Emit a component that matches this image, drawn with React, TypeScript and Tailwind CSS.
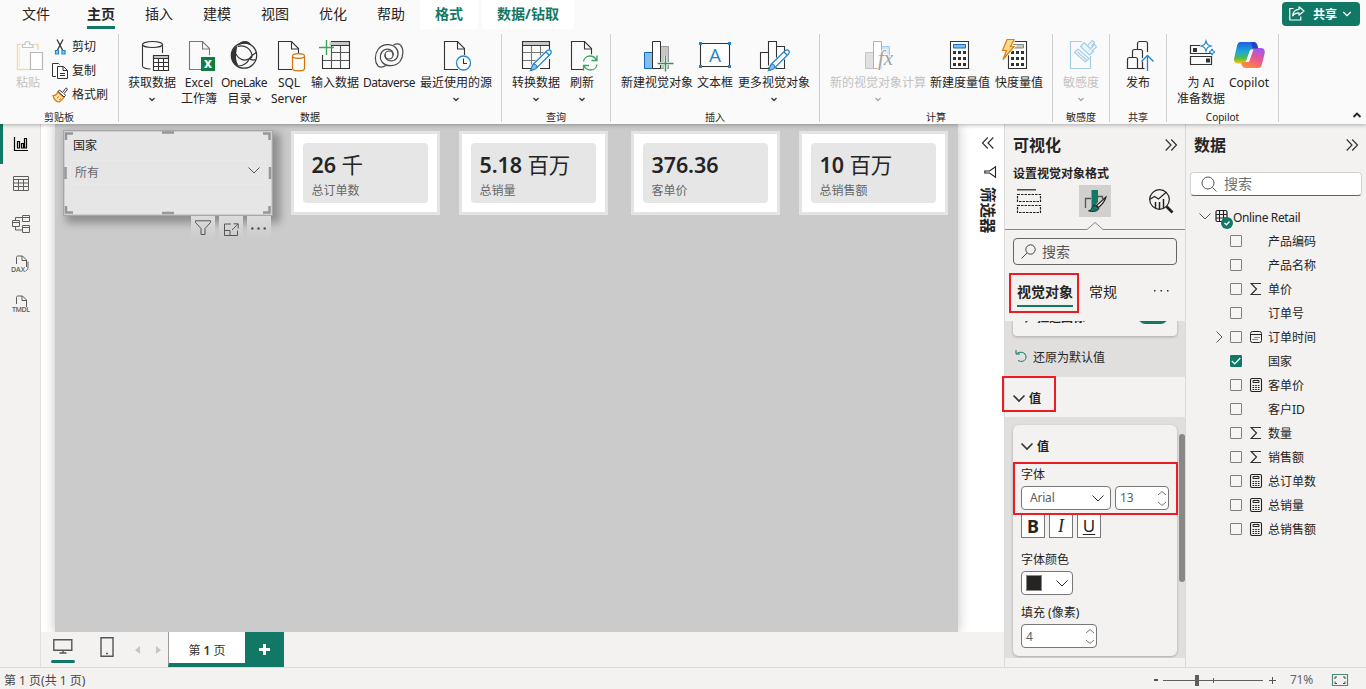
import React from "react";
import { ChevronDown } from "lucide-react";

const INK = "#333333";

const Svg: React.FC<{ w?: number; h?: number; className?: string; children: React.ReactNode }> = ({
  w = 32,
  h = 32,
  className = "",
  children,
}) => (
  <svg width={w} height={h} viewBox={`0 0 ${w} ${h}`} fill="none" className={`shrink-0 overflow-visible ${className}`}>
    {children}
  </svg>
);

/* ---------- ribbon icons ---------- */

const Doc = ({ x, stroke = INK }: { x: number; stroke?: string }) => (
  <g transform={`translate(${x} 0)`} stroke={stroke} strokeWidth="1.1">
    <path d="M14 29.500H.5v-28h13l7 7V15" fill="#fafafa" />
    <path d="M13.500 1.500v7.500h7" />
  </g>
);

const Pencil = () => (
  <g>
    <path d="M12 29L28 13" stroke="#fafafa" strokeWidth="7" />
    <g stroke="#1f83c9" strokeWidth="1.200">
      <path d="M13.500 24L27 10.700c3-2 5.500.5 3.500 3.300L17 27.500z" fill="#fafafa" />
      <path d="M26 12l3 3" />
      <path d="M13.500 24c1.800 0 3.500 1.700 3.500 3.500-1.500 2.500-4 2.300-6.500 3 1.300-2 .8-4.500 3-6.500z" fill="#83beec" />
    </g>
  </g>
);

const GetData = () => (
  <Svg>
    <g stroke={INK} strokeWidth="1.1">
      <ellipse cx="16.500" cy="4.500" rx="10" ry="3" />
      <path d="M6.500 4.500v21.500c0 1.500 3 2.700 8 3M26.500 4.500V13" />
      <path d="M17.500 15.500h15v15h-15z" fill="#fff" />
      <path d="M17.500 15.500h15v3h-15z" fill="#c8c6c4" />
      <path d="M17.500 22.500h15M17.500 26.500h15M22.500 18.500v12M27.500 18.500v12" />
    </g>
  </Svg>
);

const Excel = () => (
  <Svg>
    <Doc x={6} stroke="#777" />
    <path d="M18 17h14v14H18z" fill="#107c41" />
    <text x="25" y="28" textAnchor="middle" fontSize="11" fontWeight="800" fill="#fff" fontFamily="Open Sans, sans-serif">
      X
    </text>
  </Svg>
);

const OneLake = () => (
  <Svg>
    <circle cx="16" cy="15.500" r="12.700" stroke={INK} strokeWidth="1.200" />
    <path d="M9.500 5.500C5.500 8 3.300 11 3.300 15.500c0 5 3.200 9 8.200 11.500-2.500-3.500-3.700-7-3.500-11 .2-4 .8-7 1.500-10.500z" fill={INK} />
    <path d="M9.500 6c1.500-3.500 4-5 7.500-5 3 0 5.500 2 6.500 4.500-4.500-2.500-9.500-2.500-14 .5z" fill={INK} />
    <path
      d="M8 14c3 6 9 7.500 13.500 4.500M10 6.500c6.500-2 12.500 2 14 8.500.3 2-.5 3-2.500 3.500M11 26c5-.5 8.500-3 10.500-7.500 1-2 3-3.500 6.500-6M21.500 18.500c1.500 1.500 3.500 2 6 1"
      stroke={INK}
      strokeWidth="1.200"
    />
  </Svg>
);

const Sql = () => (
  <Svg>
    <Doc x={5} />
    <g stroke="#d9700b" strokeWidth="1.200" fill="#fff">
      <path d="M19.500 16v12.500c0 1.300 2.500 2.300 6 2.300s6-1 6-2.300V16" />
      <ellipse cx="25.500" cy="16" rx="6" ry="2.300" />
    </g>
  </Svg>
);

const EnterData = () => (
  <Svg>
    <path d="M10.500 1.500h20v4h-20z" fill="#c8c6c4" />
    <g stroke="#555" strokeWidth="1.100">
      <path d="M3 20.500h27M13 12.500h17M12.500 6v22M21.500 6v22" />
      <path d="M3.500 15v13.500h27v-27H12M12 5.500h18.500" stroke={INK} />
    </g>
    <path d="M7.500 0v15M0 7.500h15" stroke="#3da35d" strokeWidth="1.400" />
  </Svg>
);

const Dataverse = () => (
  <Svg>
    <g stroke="#4a4a4a" strokeWidth="1.200">
      <path d="M5 26C1.500 22 1.500 14.500 5 9.500 9 4 18 2.500 23 8c3.500 4 2.500 10-2 12.300-4.500 2-9.500-1-9-5.800" />
      <path d="M27.500 5c3.500 4 3 11.500-.5 16.500-4 5-13.500 6-18 .5-3-4-2-10 2.500-12.300 4.500-2 9 1 8.800 5.500" />
      <path d="M5 26c2 1.500 5 1.300 8-.5M27.500 5c-2-1.500-4.500-1.300-7 0" />
      <circle cx="16" cy="15" r="4" />
    </g>
  </Svg>
);

const Recent = () => (
  <Svg>
    <Doc x={4} />
    <circle cx="23.500" cy="23" r="7" fill="#fff" stroke="#2b88c8" strokeWidth="1.300" />
    <path d="M23.500 18.500V23.500H27" stroke={INK} strokeWidth="1.100" />
  </Svg>
);

const Transform = () => (
  <Svg>
    <path d="M2.500 1.500h27v4h-27z" fill="#c8c6c4" />
    <g strokeWidth="1.100">
      <path d="M3 12.500h26M3 20.500h18M11.500 6v22M20.500 6v15" stroke="#777" />
      <path d="M11 28.500H2.500v-27h27v8M2.500 5.500h27M29.500 19v9.500H20" stroke={INK} />
    </g>
    <Pencil />
  </Svg>
);

const Refresh = () => (
  <Svg>
    <Doc x={5} />
    <circle cx="24" cy="23" r="9" fill="#fafafa" />
    <path
      d="M17.500 21.500c.5-3.500 3.500-5.500 6.500-5.500 2.500 0 5 1.300 6.300 4M31 15.500V20.500h-5.500M31 24.500c-.5 3.500-3.500 5.500-6.500 5.500-2.500 0-5-1.300-6.500-4M17.500 30.500V25.500H23"
      stroke="#3da35d"
      strokeWidth="1.300"
    />
  </Svg>
);

const NewVisual = () => (
  <Svg>
    <path d="M19.500 6.500h8v22h-8z" fill="#c8c6c4" stroke="#999" />
    <path d="M3.500 12.500h8v16h-8z" fill="#83beec" stroke="#0f6cbd" />
    <path d="M11.500 1.500h8v27h-8z" fill="#fff" stroke={INK} />
    <path d="M24.500 15.500v16M16.500 23.500h16" stroke="#fafafa" strokeWidth="3" />
    <path d="M24.500 15.500v16M16.500 23.500h16" stroke="#2f9a4a" strokeWidth="1.400" />
  </Svg>
);

const TextBox = () => (
  <Svg>
    <path d="M1.500 3.500h29v23h-29z" fill="#fff" stroke={INK} strokeWidth="1.100" />
    <path d="M0 2h3v3H0zM29 2h3v3h-3zM0 25h3v3H0zM29 25h3v3h-3z" fill="#1f83c9" />
    <text x="16" y="22" textAnchor="middle" fontSize="19" fill="#1f83c9" fontFamily="Open Sans, sans-serif">
      A
    </text>
  </Svg>
);

const MoreVisuals = () => (
  <Svg>
    <path d="M2.500 12.500h8v16h-8zM10.500 1.500h8v27h-8zM18.500 6.500h8v22h-8z" fill="#fff" stroke={INK} strokeWidth="1.100" />
    <Pencil />
  </Svg>
);

const NewCalc = () => (
  <Svg>
    <path d="M3.500 12.500h8v16h-8z" fill="#e3e1df" stroke="#c4c4c4" />
    <path d="M19.500 6.500h8v10h-8z" fill="#cfe6f7" stroke="#a3cdea" />
    <path d="M11.500 1.500h8v27h-8z" fill="#fff" stroke="#b0b0b0" />
    <text
      x="16"
      y="25"
      fontSize="21"
      fontStyle="italic"
      fill="#a3a3a3"
      stroke="#fafafa"
      strokeWidth="2"
      paintOrder="stroke"
      fontFamily="Liberation Serif, serif"
    >
      fx
    </text>
  </Svg>
);

const CalcBody = ({ x, fill }: { x: number; fill: string }) => (
  <g transform={`translate(${x} 0)`}>
    <path d="M.5 1.500h18v27H.5z" fill="#fff" stroke={INK} strokeWidth="1.100" />
    <path d="M3.500 4.500h12v3.500h-12z" fill={fill} stroke={fill === "#83beec" ? "#0f6cbd" : "#888"} />
    <path
      d="M3 11h3v3H3zM8 11h3v3H8zM13 11h3v3h-3zM3 17h3v3H3zM8 17h3v3H8zM13 17h3v3h-3zM3 23h3v3H3zM8 23h3v3H8zM13 23h3v3h-3z"
      fill={INK}
    />
  </g>
);

const NewMeasure = () => (
  <Svg>
    <CalcBody x={6} fill="#83beec" />
  </Svg>
);

const QuickMeasure = () => (
  <Svg>
    <CalcBody x={5} fill="#c8c6c4" />
    <path d="M4 -.5h7L7.500 6.500H11L0 19.500l3.500-9H-.5z" fill="#ffd98a" stroke="#fafafa" strokeWidth="3" />
    <path d="M4 -.5h7L7.500 6.500H11L0 19.500l3.500-9H-.5z" fill="#ffd98a" stroke="#e07a10" strokeWidth="1.200" />
  </Svg>
);

const Sensitivity = () => (
  <Svg>
    <g stroke="#a3cfe8" strokeWidth="1.200">
      <path d="M17 1.500H5.500v27h20V16" />
      <path d="M9.500 12.500l3.500-3.500 11 9.500-3.500 3.500zM12.500 12l9 8" fill="#fafafa" />
      <path d="M19 2.500l9.500 9-4 3.500-9-8.500z" fill="#eaf5fb" />
      <path d="M22.500 5.500L27.500.500l2 2-3 3.500M25.500 9l2.500-3 1.500-1.500 2 2.500-4.500 4" fill="#fafafa" />
    </g>
  </Svg>
);

const Publish = () => (
  <Svg>
    <g stroke={INK} strokeWidth="1.200" fill="#fafafa">
      <path d="M15.500 28.500v-25c0-1 1-2 2-2h6c1 0 2 1 2 2V12" />
      <path d="M10.500 17v-5.500c0-1 1-2 2-2h6c1 0 2 1 2 2v17h-5" />
      <path d="M5.500 28.500v-9c0-1 1-2 2-2h6c1 0 2 1 2 2v9z" />
      <path d="M15.500 28.500h7" />
    </g>
    <path d="M25.500 31V15.500M20 21l5.500-5.500L31 21" stroke="#fafafa" strokeWidth="3.500" />
    <path d="M25.500 31V15.500M19.500 21.500l6-6 6 6" stroke="#1f83c9" strokeWidth="1.300" />
  </Svg>
);

const PrepAi = () => (
  <Svg>
    <g stroke={INK} strokeWidth="1.200">
      <path d="M15 5.500H5.500v8h21" />
      <path d="M5.500 16.500h21v8h-21z" />
    </g>
    <path d="M8 8h4v4H8zM21 18.500h4v4h-4z" fill={INK} />
    <g stroke="#2b88c8" strokeWidth="1.200">
      <path d="M21 1c1 3.500 1.500 4 5 5-3.500 1-4 1.500-5 5-1-3.500-1.500-4-5-5 3.500-1 4-1.500 5-5z" fill="#fafafa" />
      <path d="M27 9c.5 2 1 2.500 3 3-2 .5-2.500 1-3 3-.5-2-1-2.500-3-3 2-.5 2.500-1 3-3z" fill="#fafafa" />
    </g>
  </Svg>
);

const Copilot = () => (
  <Svg>
    <defs>
      <linearGradient id="cpA" x1="0" y1="0" x2="0" y2="1">
        <stop offset="0" stopColor="#1c5fe0" />
        <stop offset=".45" stopColor="#1ba7d8" />
        <stop offset=".75" stopColor="#58b84a" />
        <stop offset="1" stopColor="#ffc800" />
      </linearGradient>
      <linearGradient id="cpB" x1=".7" y1="0" x2=".3" y2="1">
        <stop offset="0" stopColor="#a057f0" />
        <stop offset=".5" stopColor="#e9588f" />
        <stop offset="1" stopColor="#ff8a3c" />
      </linearGradient>
    </defs>
    <path d="M7.500 2H20c3 0 4 2 4.500 4l1 3H20c-2 0-3 1-3.500 2.500L13 21.500C12 23 11 23.500 9 23.500H5c-3.500 0-4.500-3-3.700-6L4 6c.6-2.500 1.500-4 3.500-4z" fill="url(#cpA)" />
    <path d="M25.500 28H13c-3 0-4-2-4.500-4L8 22.500h3c2.500 0 3.500-1 4-2.500l3.500-10c.5-1.500 1.500-2 3-2h6.500c3.500 0 4.300 3 3.500 6L29 24c-.6 2.500-1.500 4-3.500 4z" fill="url(#cpB)" />
    <path d="M18 2h2.500c2.500 0 3.500 2 4 4l.7 2.500h-5.500z" fill="#2a3fc0" />
    <path d="M19 9.500h1.500l-4.500 12.500h-3l4-11z" fill="#fafafa" />
  </Svg>
);

const Caret = ({ muted = false }: { muted?: boolean }) => (
  <svg width="6" height="5" viewBox="0 0 6 5" fill="none" className="inline-block">
    <path d="M.5 1L3 3.500 5.500 1" stroke={muted ? "#a8a8a8" : "#333"} strokeWidth="1.300" />
  </svg>
);

/* ---------- ribbon ---------- */

type BtnProps = {
  w: string;
  icon: React.ReactNode;
  label: string;
  line2?: string;
  caret?: boolean;
  muted?: boolean;
  tight?: boolean;
};

const RibbonBtn: React.FC<BtnProps> = ({ w, icon, label, line2, caret, muted, tight }) => (
  <button className={`${w} flex shrink-0 flex-col items-center pt-2 whitespace-nowrap ${muted ? "text-[#c2c2c2]" : ""}`}>
    {icon}
    <span className={`mt-[3px] h-4 leading-4 ${tight ? "tracking-[-0.55px]" : ""}`}>{label}</span>
    <span className="flex h-4 items-center gap-[3px] leading-4">
      {line2}
      {caret && <Caret muted={muted} />}
    </span>
  </button>
);

const Group: React.FC<{ w: string; label: string; children: React.ReactNode }> = ({ w, label, children }) => (
  <div className={`${w} flex h-[88px] shrink-0 flex-col border-r border-[#d0d0d0]`}>
    <div className="-mt-0.5 flex h-[79px] shrink-0">{children}</div>
    <div className="text-center text-[10px] leading-[13px]">{label}</div>
  </div>
);

const tabs = ["插入", "建模", "视图", "优化", "帮助"];

const Ribbon = () => (
  <header className="relative z-20 h-[124px] shrink-0 bg-[#fafafa] shadow-[0_1px_4px_rgba(0,0,0,0.3)]">
    <div className="flex h-[34px] items-start text-sm leading-[27px]">
      <span className="w-[72px] text-center">文件</span>
      <span className="flex w-[58px] flex-col items-center font-bold">
        <span className="h-[26px]">主页</span>
        <span className="h-[3px] w-7 bg-[#117865]" />
      </span>
      {tabs.map((t) => (
        <span key={t} className="w-[58px] text-center">
          {t}
        </span>
      ))}
      <span className="h-[29px] w-[58px] bg-white text-center font-bold text-[#117865]">格式</span>
      <span className="ml-1 h-[29px] w-[92px] bg-white text-center font-bold text-[#117865]">数据/钻取</span>
      <button className="mt-0.5 mr-1.5 ml-auto flex h-6 w-[78px] items-center rounded bg-[#117865] pl-[7px] text-xs font-bold text-white">
        <Svg w={16} h={16}>
          <path
            d="M4.500 2.500H.8v11.500h11V10.500M10 .8l5 4.200-5 4.200V6.800c-3 0-5 1-6.300 3C4 6 6 3.500 10 3.300z"
            stroke="#fff"
            strokeWidth="1.200"
            strokeLinejoin="round"
          />
        </Svg>
        <span className="mt-0.5 ml-2">共享</span>
        <ChevronDown size={14} strokeWidth={2} className="ml-[3px]" />
      </button>
    </div>
    <div className="flex text-xs">
      <Group w="w-[119px]" label="剪贴板">
        <button className="flex w-14 flex-col items-center pt-2 text-[#c2c2c2]">
          <Svg>
            <path d="M9 4.500H5.500v25H18M26 10V4.500h-3.500" stroke="#f5d9ae" strokeWidth="1.500" />
            <path d="M7.500 27V7" stroke="#f9e6c8" />
            <path d="M10.500 7.500v-3H13c0-2 1-3 2.500-3s2.500 1 2.500 3h3v3z" stroke="#c4c4c4" strokeWidth="1.200" fill="#fafafa" />
            <path d="M18.500 12.500h12v17h-12z" stroke="#b8b8b8" strokeWidth="1.200" fill="#fff" />
          </Svg>
          <span className="mt-[3px] leading-4">粘贴</span>
        </button>
        <div className="-ml-1 flex flex-col pt-[3px] text-xs leading-6">
          <div className="flex h-6 items-center gap-1">
            <Svg w={16} h={16}>
              <path d="M5 .5l5.500 10.500M11 .5L5.500 11" stroke={INK} strokeWidth="1.300" />
              <path d="M3.500 11.500h3v3.500h-3zM10 11.500h3v3.500h-3z" fill="#9bd0f5" stroke="#1f83c9" strokeWidth="1.200" />
            </Svg>
            剪切
          </div>
          <div className="flex h-6 items-center gap-1">
            <Svg w={16} h={16}>
              <path d="M4 13.500H.5V.5h6l1 1" stroke={INK} />
              <path d="M5.500 3.500h6l4 4v8h-10zM11 3.500v4h4.500M8 10.500h5M8 12.500h5" stroke={INK} />
            </Svg>
            复制
          </div>
          <div className="flex h-6 items-center gap-1">
            <Svg w={16} h={16}>
              <path d="M6 5l6 5.500-4.500 4.500c-3 0-5.500-2.500-6.500-6.500C3 9 5 7 6 5z" fill="#ffe3ad" stroke="#e07a10" strokeWidth="1.200" />
              <path d="M5 11l2-1.500M7 13l2-1.500" stroke="#e07a10" />
              <path d="M6 4.500l1.500-1.500L10.500 5.500l3-4c1-1 2.500.3 1.500 1.500L12 6.500l1.500 2-1.500 1.500z" fill="#fff" stroke={INK} />
            </Svg>
            格式刷
          </div>
        </div>
      </Group>
      <Group w="w-[383px]" label="数据">
        <div className="w-[7px] shrink-0" />
        <RibbonBtn w="w-[52px]" icon={<GetData />} label="获取数据" caret />
        <RibbonBtn w="w-[42px]" icon={<Excel />} label="Excel" line2="工作簿" />
        <RibbonBtn w="w-[48px]" icon={<OneLake />} label="OneLake" line2="目录" caret tight />
        <RibbonBtn w="w-[42px]" icon={<Sql />} label="SQL" line2="Server" />
        <RibbonBtn w="w-[50px]" icon={<EnterData />} label="输入数据" />
        <RibbonBtn w="w-[58px]" icon={<Dataverse />} label="Dataverse" tight />
        <RibbonBtn w="w-[76px]" icon={<Recent />} label="最近使用的源" caret />
      </Group>
      <Group w="w-[109px]" label="查询">
        <div className="w-[6px] shrink-0" />
        <RibbonBtn w="w-[56px]" icon={<Transform />} label="转换数据" caret />
        <RibbonBtn w="w-[36px]" icon={<Refresh />} label="刷新" caret />
      </Group>
      <Group w="w-[209px]" label="插入">
        <div className="w-[9px] shrink-0" />
        <RibbonBtn w="w-[74px]" icon={<NewVisual />} label="新建视觉对象" />
        <RibbonBtn w="w-[42px]" icon={<TextBox />} label="文本框" />
        <RibbonBtn w="w-[76px]" icon={<MoreVisuals />} label="更多视觉对象" caret />
      </Group>
      <Group w="w-[233px]" label="计算">
        <div className="w-[8px] shrink-0" />
        <RibbonBtn w="w-[100px]" icon={<NewCalc />} label="新的视觉对象计算" caret muted />
        <RibbonBtn w="w-[64px]" icon={<NewMeasure />} label="新建度量值" />
        <RibbonBtn w="w-[54px]" icon={<QuickMeasure />} label="快度量值" />
      </Group>
      <Group w="w-[57px]" label="敏感度">
        <RibbonBtn w="w-[56px]" icon={<Sensitivity />} label="敏感度" caret muted />
      </Group>
      <Group w="w-[57px]" label="共享">
        <RibbonBtn w="w-[56px]" icon={<Publish />} label="发布" />
      </Group>
      <Group w="w-[112px]" label="Copilot">
        <div className="w-[9px] shrink-0" />
        <RibbonBtn w="w-[50px]" icon={<PrepAi />} label="为 AI" line2="准备数据" />
        <RibbonBtn w="w-[46px]" icon={<Copilot />} label="Copilot" />
      </Group>
      <Svg w={8} h={6} className="mt-[78px] mr-[5px] ml-auto">
        <path d="M.5 5L4 1.500 7.500 5" stroke="#222" strokeWidth="1.800" />
      </Svg>
    </div>
  </header>
);

/* ---------- left navigation ---------- */

const SideNav = () => (
  <nav className="flex w-[41px] shrink-0 flex-col border-r border-[#e1dfdd] text-[#605e5c]">
    <div className="flex h-10 items-center justify-center border-l-[3px] border-[#117865] pr-[2px]">
      <Svg w={14} h={14}>
        <path d="M.5 0v13.500H14M3.500 4.500h2v6.500h-2zM7.500 6.500h2V11h-2zM10.500 1.500h2V11h-2z" stroke="#000" strokeWidth="1.200" />
      </Svg>
    </div>
    <div className="flex h-10 items-center justify-center pb-[2px] pl-0.5">
      <Svg w={16} h={15}>
        <path d="M.5.500h15v14H.5zM.5 3.500h15M.5 7h15M.5 10.500h15M5.500 3.500v11M10.500 3.500v11" stroke="currentColor" />
      </Svg>
    </div>
    <div className="flex h-10 items-center justify-center pl-0.5">
      <Svg w={18} h={18}>
        <path
          d="M.5 5.500h7v6h-7zM.5 7.500h7M10.500.500h7v6h-7zM10.500 2.500h7M10.500 10.500h7v7h-7zM10.500 12.500h7M3.500 5.500v-3h7M3.500 11.500v3.500h7"
          stroke="currentColor"
        />
      </Svg>
    </div>
    {["DAX", "TMDL"].map((t) => (
      <div key={t} className="flex h-10 items-center justify-center pl-0.5">
        <Svg w={20} h={18}>
          <path d="M5.500 9V2.500c0-1 .5-1.500 1.500-1.500h4.500l4 4V12M11 1v4.500h4.500" stroke="currentColor" />
          {t === "DAX" && <path d="M14.500 16c2-1 2.500-2 2.500-4V6.500" stroke="currentColor" />}
          <text
            x={t === "DAX" ? 0 : 1}
            y="17"
            fontSize="7"
            fill="currentColor"
            fontWeight="600"
            fontFamily="Open Sans, sans-serif"
            textLength={t === "DAX" ? 14 : 18}
          >
            {t}
          </text>
        </Svg>
      </div>
    ))}
  </nav>
);

/* ---------- report canvas ---------- */

const Card: React.FC<{ value: string; unit?: string; label: string; className?: string }> = ({ value, unit, label, className = "" }) => (
  <div className={`${className} mt-[7px] h-[84px] w-[149px] shrink-0 border-[3px] border-[#e4e4e4] bg-white p-[9px]`}>
    <div className="h-[60px] w-[125px] rounded bg-[#e6e6e6] pt-[7px] pl-[8.5px]">
      <div className="flex h-[30px] items-center gap-[5.5px] text-[21.5px] leading-[30px] tracking-[-0.1px] text-[#252423]">
        <span className="font-semibold">{value}</span>
        {unit && <span className="font-normal">{unit}</span>}
      </div>
      <div className="text-xs leading-[21px] text-[#666]">{label}</div>
    </div>
  </div>
);

const toolCls = "flex h-[23px] w-6 items-center justify-center bg-gradient-to-b from-[#dcdcdc] to-[#cbcbcb]";

const Slicer = () => (
  <div className="relative mt-1.5 ml-2 h-[86px] w-[210px] shrink-0 border border-[#a6a6a6] bg-[#e6e6e6] shadow-[5px_5px_8px_2px_rgba(0,0,0,0.3)]">
    <div className="h-full border border-[#cfcfcf] px-[5px]">
      <div className="mt-1 px-[3px] text-xs leading-5 text-[#252423]">国家</div>
      <div className="mt-1 flex h-[25px] items-center justify-between border border-[#e9e9e9] pt-px pr-[5px] pl-1 text-xs text-[#666]">
        所有
        <Svg w={12} h={7} className="-mt-1.5">
          <path d="M.5.500L6 6 11.500.500" stroke="#555" />
        </Svg>
      </div>
    </div>
    <svg width="208" height="84" viewBox="0 0 208 84" fill="none" className="pointer-events-none absolute inset-0">
      <path
        d="M2 9V2.500h7M199 2.500h6.500V9M205.500 75v6.500H199M9 81.500H2V75M98 1.500h12M98 82h12M1.500 36v12M206 36v12"
        stroke="#979797"
        strokeWidth="2.500"
      />
    </svg>
    {/* hover toolbar of the selected visual */}
    <div className="absolute top-[85px] right-px flex gap-1 text-[#555]">
      <div className={toolCls}>
        <Svg w={16} h={15}>
          <path d="M.5.800h15v1.700L10 8.500v6H6v-6L.5 2.500z" stroke="currentColor" />
        </Svg>
      </div>
      <div className={toolCls}>
        <Svg w={15} h={13} className="mt-1">
          <path d="M7 1H.5v11.500h13V7.500M.5 7.500h5.500v5M9.500.800h4.700v4.700M14 1L8 7" stroke="currentColor" />
        </Svg>
      </div>
      <div className={toolCls}>
        <Svg w={15} h={3} className="mt-0.5 -ml-0.5">
          <g fill="currentColor">
            <circle cx="1.300" cy="1.500" r="1.300" />
            <circle cx="7.500" cy="1.500" r="1.300" />
            <circle cx="13.700" cy="1.500" r="1.300" />
          </g>
        </Svg>
      </div>
    </div>
  </div>
);

const PageBar = () => (
  <div className="flex h-[35px] shrink-0 bg-[#f3f2f1]">
    <div className="flex w-[43px] flex-col items-center pt-[7px]">
      <Svg w={20} h={15}>
        <path d="M.8.800h18v10.500H.8zM10 11.500v2.500M6.500 14h7" stroke="#555" strokeWidth="1.400" />
      </Svg>
      <span className="mt-[6px] h-[3px] w-6 rounded bg-[#117865]" />
    </div>
    <div className="flex w-[47px] justify-center pt-[5px] pr-0.5">
      <Svg w={14} h={20}>
        <path d="M1 .800h12v18.500H1zM6 16.500h2" stroke="#555" strokeWidth="1.400" />
      </Svg>
    </div>
    <div className="flex w-[37px] items-center justify-between pr-[7px] pl-1 text-[#c8c6c4]">
      <Svg w={5} h={8}>
        <path d="M5 0v8L0 4z" fill="currentColor" />
      </Svg>
      <Svg w={5} h={8}>
        <path d="M0 0v8l5-4z" fill="currentColor" />
      </Svg>
    </div>
    <div className="w-[77px] border-b-4 border-l border-b-[#117865] border-l-[#999] bg-white pt-px text-center text-xs leading-9 text-[#333]">
      第 <span className="font-semibold">1</span> 页
    </div>
    <div className="flex w-[39px] items-center justify-center bg-[#117865]">
      <Svg w={11} h={11}>
        <path d="M5.500 0v11M0 5.500h11" stroke="#fff" strokeWidth="3" />
      </Svg>
    </div>
  </div>
);

const Chevrons = ({ left = false }: { left?: boolean }) => (
  <Svg w={12} h={12} className={left ? "rotate-180" : ""}>
    <path d="M.7.500L6 6 .7 11.500M6.200.500L11.500 6l-5.300 5.500" stroke="#333" strokeWidth="1.200" />
  </Svg>
);

const Canvas = () => (
  <section className="flex w-[963px] shrink-0 flex-col">
    <div className="flex h-[508px] overflow-hidden bg-white">
      <div className="ml-[14px] flex w-[903px] shrink-0 items-start bg-[#cbcbcb] shadow-[0_0_11px_rgba(0,0,0,0.25)]">
        <Slicer />
        <Card className="ml-[18px]" value="26" unit="千" label="总订单数" />
        <Card className="ml-[19px]" value="5.18" unit="百万" label="总销量" />
        <Card className="ml-[23px]" value="376.36" label="客单价" />
        <Card className="ml-[19px]" value="10" unit="百万" label="总销售额" />
      </div>
      {/* collapsed filter pane */}
      <div className="ml-auto flex w-8 flex-col items-center pt-[13px]">
        <Chevrons left />
        <Svg w={12} h={12} className="mt-[17px] ml-1">
          <path d="M11.500.800v10.400L5.500 7H.8V5h4.700z" stroke="#222" strokeWidth="1.100" />
        </Svg>
        <span className="mt-[9px] text-[15.5px] leading-5 font-bold [text-orientation:sideways] [writing-mode:vertical-rl]">筛选器</span>
      </div>
    </div>
    <PageBar />
  </section>
);

/* ---------- visualizations pane ---------- */

const Spinner = () => (
  <Svg w={8} h={15}>
    <path d="M0 4L4 .500 8 4M0 11l4 3.500L8 11" stroke="#666" strokeWidth=".9" />
  </Svg>
);

const Down = ({ bold = false }: { bold?: boolean }) => (
  <Svg w={12} h={7}>
    <path d="M.5.500L6 6 11.500.500" stroke="#333" strokeWidth={bold ? 1.6 : 1} />
  </Svg>
);

const VizPane = () => (
  <aside className="flex w-[182px] shrink-0 flex-col overflow-hidden border-x border-[#dcdad8] bg-[#f3f2f1]">
    <div className="flex h-[41px] items-center justify-between pr-2 pl-2 text-base font-bold">
      可视化
      <Chevrons />
    </div>
    <div className="pl-2 text-xs leading-[18px] font-bold">设置视觉对象格式</div>
    <div className="mt-0.5 flex h-8 items-center pl-[11px]">
      <Svg w={26} h={25}>
        <path d="M1 .800h19" stroke="#222" strokeWidth="1.200" />
        <path d="M1.500 5.500h23v7h-23zM1.500 16.500h23v7h-23z" stroke="#222" strokeWidth="1.200" strokeDasharray="2.500 1" />
      </Svg>
      <div className="ml-[37px] flex h-8 w-8 items-center justify-center bg-[#d2d0ce]">
        <Svg w={24} h={24}>
          <path d="M2.500 19V9.500H8M15 7.500h4.500V10" stroke="#555" strokeWidth="1.300" />
          <path d="M8.500 1h6.500v12l-4 5h-2.500z" fill="#117865" />
          <path d="M23 8L13.500 16.500l2 2C19 15.500 22 12 23 8z" fill="#f3f2f1" stroke="#222" strokeWidth="1.100" />
          <path d="M12.500 16.500c-2.500 0-3.500 1.500-4 3-.5 1.300-1.500 1.800-3 2.300 4 1.500 9 .7 10.500-2.300z" fill="#117865" stroke="#222" />
        </Svg>
      </div>
      <Svg w={26} h={26} className="ml-[37px]">
        <circle cx="11.500" cy="11.500" r="9.800" stroke="#222" strokeWidth="1.200" />
        <path d="M1.500 11.500l5-3 4 2.500 8-7" stroke="#222" strokeWidth="1.200" />
        <path d="M7.500 20v-6M11.500 21v-7M15.500 20v-9" stroke="#222" strokeWidth="1.500" />
        <path d="M18.500 18.500l6 6" stroke="#222" strokeWidth="2.800" />
      </Svg>
    </div>
    <svg width="180" height="12" viewBox="0 0 180 12" fill="none" className="mt-1 shrink-0">
      <path d="M0 8.500h82l8-7 8 7h82" stroke="#8a8886" />
    </svg>
    <div className="mt-[5px] ml-2 flex h-[27px] w-[164px] shrink-0 items-center gap-1.5 rounded-sm border border-[#666] pl-[7px] text-sm text-[#555]">
      <Svg w={15} h={15}>
        <circle cx="9.500" cy="5.500" r="4.700" stroke="#444" />
        <path d="M6 9l-5.500 5.500" stroke="#444" />
      </Svg>
      搜索
    </div>
    <div className="flex h-14 shrink-0 items-start pt-4 pl-3 text-sm leading-[22px]">
      <span className="flex flex-col font-bold">
        视觉对象
        <span className="mt-0.5 h-0.5 w-14 bg-[#117865]" />
      </span>
      <span className="ml-4">常规</span>
      <Svg w={16} h={2} className="mt-[9px] ml-9">
        <path d="M1 0h1.500v1.500H1zM7.500 0H9v1.500H7.500zM14 0h1.500v1.500H14z" fill="#333" />
      </Svg>
    </div>
    <div className="flex h-[337px] shrink-0 overflow-hidden bg-[#e1dfdd]">
      <div className="flex w-[180px] shrink-0 flex-col">
        <div className="-mt-3 ml-2 flex h-[27px] w-[164px] shrink-0 items-start rounded bg-[#f3f2f1] px-2 text-xs font-bold shadow-[0_1px_3px_rgba(0,0,0,0.25)]">
          <Svg w={7} h={12} className="mt-0.5 ml-1">
            <path d="M.5.500L6 6 .5 11.500" stroke="#333" strokeWidth="1.300" />
          </Svg>
          <span className="ml-[5px] leading-[17px]">拉选图标</span>
          <span className="mr-px ml-auto h-[15px] w-[30px] rounded-full bg-[#117865]" />
        </div>
        <div className="flex h-[41px] shrink-0 items-center gap-1.5 pt-[3px] pl-2.5 text-xs">
          <Svg w={12} h={12} className="-mt-1">
            <path d="M1 0v4h4M1.300 3.800C5 1 11 2 11 7c0 4-4.500 5.500-8 3.500" stroke="#117865" />
          </Svg>
          还原为默认值
        </div>
        <div className="flex h-10 shrink-0 items-center gap-1 bg-[#f3f2f1] pt-[3px] pl-[8px] text-xs font-bold">
          <Down bold />
          值
        </div>
        <div className="mt-2 ml-2 flex h-[231px] w-[164px] shrink-0 flex-col rounded-md bg-[#f3f2f1] px-2 text-xs shadow-[0_1px_3px_rgba(0,0,0,0.25)]">
          <div className="flex h-[41px] items-center gap-1 pt-0.5 font-bold">
            <Down bold />
            值
          </div>
          <div className="-mt-px leading-[19px]">字体</div>
          <div className="mt-0.5 flex gap-1 text-[#605e5c]">
            <div className="flex h-6 w-[90px] items-center justify-between rounded-sm border border-[#777] bg-white pr-1.5 pl-2">
              <span className="tracking-[-0.2px]">Arial</span>
              <Down />
            </div>
            <div className="flex h-6 w-[54px] items-center justify-between rounded-sm border border-[#777] bg-white pr-[2px] pl-1">
              13
              <Spinner />
            </div>
          </div>
          <div className="mt-1 flex gap-1 text-lg leading-[22px]">
            <span className="h-6 w-6 border border-[#777] bg-white text-center font-bold">B</span>
            <span className="h-6 w-6 border border-[#777] bg-white text-center font-['Liberation_Serif'] italic">I</span>
            <span className="h-6 w-6 border border-[#777] bg-white text-center text-[17px] leading-[22px] underline underline-offset-2">U</span>
          </div>
          <div className="mt-3 leading-5">字体颜色</div>
          <div className="mt-px flex h-6 w-[52px] items-center justify-between rounded-sm border border-[#777] bg-white pr-1 pl-1">
            <span className="h-4 w-4 border border-[#888] bg-[#252423]" />
            <Down />
          </div>
          <div className="mt-2 leading-5">填充 (像素)</div>
          <div className="mt-px flex h-6 w-[76px] items-center justify-between rounded-sm border border-[#777] bg-white pt-px pr-[2px] pl-1 text-[#605e5c]">
            4
            <Spinner />
          </div>
        </div>
      </div>
      <div className="mt-[113px] -ml-[6px] h-[148px] w-[6px] shrink-0 rounded-full bg-[#8a8886]" />
    </div>
  </aside>
);

/* ---------- data pane ---------- */

type Field = { name: string; kind?: "sum" | "calc" | "date"; checked?: boolean };

const fields: Field[] = [
  { name: "产品编码" },
  { name: "产品名称" },
  { name: "单价", kind: "sum" },
  { name: "订单号" },
  { name: "订单时间", kind: "date" },
  { name: "国家", checked: true },
  { name: "客单价", kind: "calc" },
  { name: "客户ID" },
  { name: "数量", kind: "sum" },
  { name: "销售额", kind: "sum" },
  { name: "总订单数", kind: "calc" },
  { name: "总销量", kind: "calc" },
  { name: "总销售额", kind: "calc" },
];

const FieldIcon = ({ kind }: { kind?: Field["kind"] }) => (
  <Svg w={12} h={14}>
    {kind === "sum" && <path d="M11 1.500H1.200L6.500 7l-5.300 5.500H11" stroke="#333" strokeWidth="1.200" />}
    {kind === "date" && (
      <>
        <rect x=".5" y="1.500" width="11" height="11" rx="2" stroke="#222" />
        <path d="M.5 4.500h11" stroke="#222" />
        <path d="M4.500 7.500h5M2.500 9.500h5" stroke="#222" strokeDasharray="1 1" />
      </>
    )}
    {kind === "calc" && (
      <>
        <rect x=".5" y=".5" width="11" height="13" rx="1.500" stroke="#222" strokeWidth="1.100" />
        <path d="M3 2.500h6v2H3z" stroke="#222" />
        <path d="M2.500 7.500h7M2.500 9.500h7M2.500 11.500h7" stroke="#222" strokeWidth="1.200" strokeDasharray="1.700 .95" />
      </>
    )}
  </Svg>
);

const DataPane = () => (
  <aside className="flex w-[180px] shrink-0 flex-col bg-[#f3f2f1]">
    <div className="flex h-[41px] items-center justify-between pr-2 pl-2 text-base font-bold">
      数据
      <Chevrons />
    </div>
    <div className="mt-[7px] ml-1 flex h-6 w-[172px] items-center gap-[7px] rounded border border-[#d1d1d1] border-b-[#616161] bg-white pl-2.5 text-sm text-[#707070]">
      <Svg w={16} h={16}>
        <circle cx="7" cy="7" r="6" stroke="#555" />
        <path d="M11.500 11.500l4 4" stroke="#555" />
      </Svg>
      搜索
    </div>
    <div className="mt-[10px] flex h-6 items-center pl-[13px] text-xs">
      <Svg w={12} h={7} className="-mt-1">
        <path d="M.5.500L6 6 11.500.500" stroke="#555" />
      </Svg>
      <Svg w={18} h={18} className="-mt-0.5 ml-1">
        <rect x="1" y="2.500" width="11" height="11" rx="1.500" stroke="#222" strokeWidth="1.200" />
        <path d="M1 6.500h11M1 10h11M4.500 2.500v11M8.500 2.500v11" stroke="#222" strokeWidth="1.100" />
        <circle cx="12" cy="15" r="6" fill="#117865" />
        <path d="M9.500 15l2 1.800 3-3.300" stroke="#fff" strokeWidth="1.300" />
      </Svg>
      <span className="tracking-[-0.35px] whitespace-nowrap">Online Retail</span>
    </div>
    {fields.map((f) => (
      <div key={f.name} className="flex h-6 shrink-0 items-center text-xs">
        <span className="flex w-11 justify-end pr-[7px]">
          {f.kind === "date" && (
            <Svg w={7} h={12} className="-mt-0.5">
              <path d="M.5.500L6 6 .5 11.500" stroke="#555" />
            </Svg>
          )}
        </span>
        <span
          className={`-mt-0.5 flex h-3 w-3 items-center justify-center rounded-[1px] border ${
            f.checked ? "border-[#117865] bg-[#117865]" : "border-[#808080] bg-[#f7f6f5]"
          }`}
        >
          {f.checked && (
            <Svg w={10} h={8}>
              <path d="M.8 4l2.900 2.800L9.300 1" stroke="#fff" strokeWidth="1.200" />
            </Svg>
          )}
        </span>
        <span className="-mt-0.5 ml-2 flex">
          <FieldIcon kind={f.kind} />
        </span>
        <span className="ml-1.5">{f.name}</span>
      </div>
    ))}
  </aside>
);

const StatusBar = () => (
  <footer className="flex h-[22px] shrink-0 items-center border-t border-[#dcdad8] pt-[3px] pr-[18px] pl-1 text-xs text-[#484644]">
    <span className="mt-px">第 1 页(共 1 页)</span>
    <span className="mr-[5px] ml-auto h-[1.5px] w-1 bg-[#555]" />
    <Svg w={100} h={12} className="-mt-px">
      <path d="M0 6.500h100M50.500 4v5" stroke="#605e5c" />
      <path d="M32 1h4v11h-4z" fill="#605e5c" />
    </Svg>
    <Svg w={7} h={7} className="ml-[6px]">
      <path d="M3.500 0v7M0 3.500h7" stroke="#555" />
    </Svg>
    <span className="ml-[14px] w-[42px] tracking-[-0.3px] text-[#666]">71%</span>
    <Svg w={16} h={12}>
      <path d="M.5.500h15v11H.5z" stroke="#4c8a7d" strokeWidth="1.200" />
      <path d="M3 5V3h2M11 3h2v2M13 7.500v2h-2M5 9.500H3v-2" stroke="#444" />
    </Svg>
  </footer>
);

const App: React.FC = () => {
  return (
    <div className="relative flex h-[689px] w-[1366px] flex-col overflow-hidden bg-[#f3f2f1] font-['Noto_Sans','Noto_Sans_CJK_SC',sans-serif] text-[#252423]">
      <Ribbon />
      <main className="flex h-[543px] shrink-0">
        <SideNav />
        <Canvas />
        <VizPane />
        <DataPane />
      </main>
      <StatusBar />

      {/* callout frames */}
      <div className="absolute top-[273px] left-[1009px] z-30 h-10 w-[70px] border-2 border-[#ec1c24]" />
      <div className="absolute top-[376px] left-[1002px] z-30 h-9 w-[54px] border-2 border-[#ec1c24]" />
      <div className="absolute top-[462px] left-[1013px] z-30 h-[53px] w-[165px] border-2 border-[#ec1c24]" />
    </div>
  );
};

export default App;
